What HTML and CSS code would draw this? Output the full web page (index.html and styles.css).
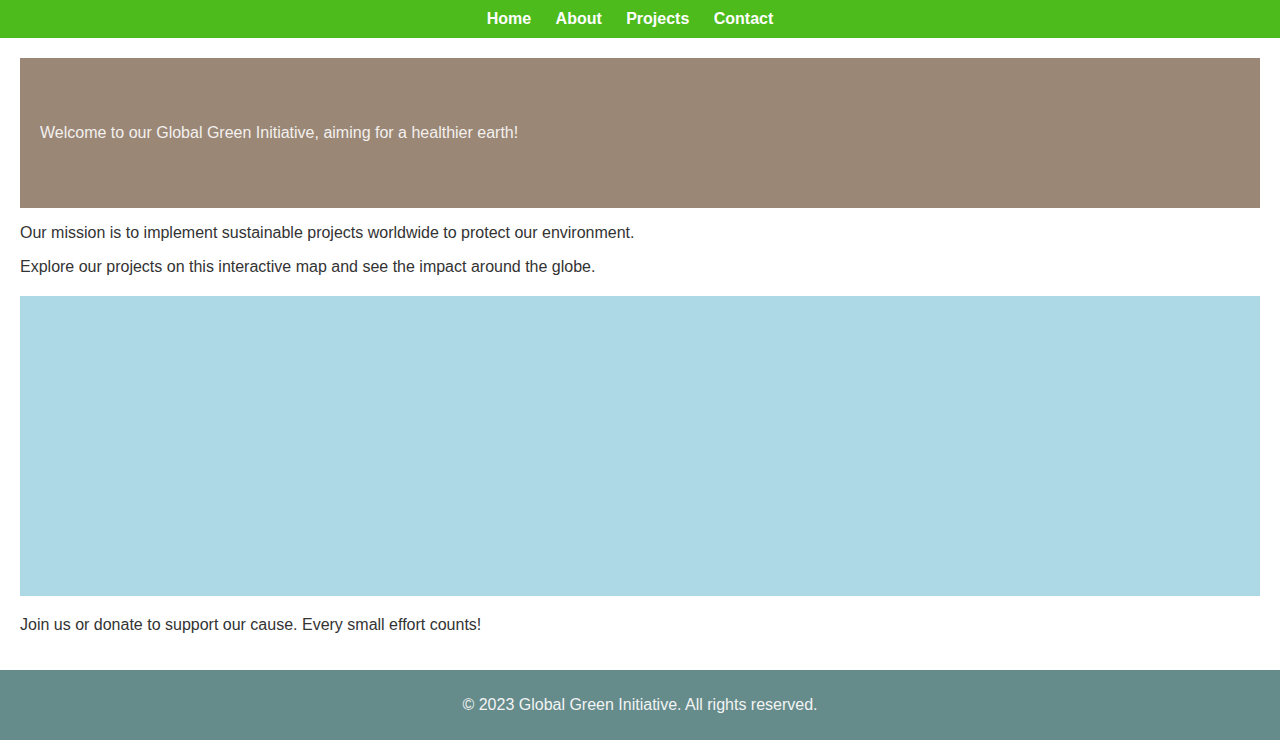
FILE: index.html
```html
<!DOCTYPE html>
<html lang="en">
<head>
<meta charset="utf-8">
<title>Global Green Initiative</title>
<link rel="stylesheet" href="styles.css">
</head>
<body>
<nav class="nav">
  <a class="nav-link" href="#">Home</a>
  <a class="nav-link" href="#">About</a>
  <a class="nav-link" href="#">Projects</a>
  <a class="nav-link" href="#">Contact</a>
</nav>
<main class="main">
  <section class="hero">
    <p class="hero-text">Welcome to our Global Green Initiative, aiming for a healthier earth!</p>
  </section>
  <p class="text">Our mission is to implement sustainable projects worldwide to protect our environment.</p>
  <p class="text">Explore our projects on this interactive map and see the impact around the globe.</p>
  <div class="map"></div>
  <p class="text">Join us or donate to support our cause. Every small effort counts!</p>
</main>
<footer class="footer">
  <p class="footer-text">© 2023 Global Green Initiative. All rights reserved.</p>
</footer>
</body>
</html>
```
FILE: styles.css
```css
html, body {
  margin: 0;
  padding: 0;
  background: #ffffff;
  font-family: "Liberation Sans", Arial, sans-serif;
  font-size: 16px;
  color: #333333;
}

.nav {
  background: #4cbb1b;
  height: 38px;
  display: flex;
  justify-content: center;
  align-items: center;
  gap: 4.4px;
}

.nav-link {
  color: #ffffff;
  font-weight: bold;
  text-decoration: none;
  line-height: 18px;
  margin-right: 20px;
}

.main {
  padding: 20px;
}

.hero {
  background: #9a8776;
  height: 150px;
  display: flex;
  align-items: center;
  padding: 0 20px;
}

.hero-text {
  margin: 0;
  color: #f3f0ee;
  line-height: 18px;
}

.text {
  margin: 16px 0;
  line-height: 18px;
}

.map {
  background: #add8e6;
  height: 300px;
  margin: 20px 0;
}

.footer {
  background: #668b8b;
  height: 70px;
  display: flex;
  justify-content: center;
  align-items: center;
}

.footer-text {
  margin: 0;
  color: #f2f4f4;
  line-height: 18px;
}
```
